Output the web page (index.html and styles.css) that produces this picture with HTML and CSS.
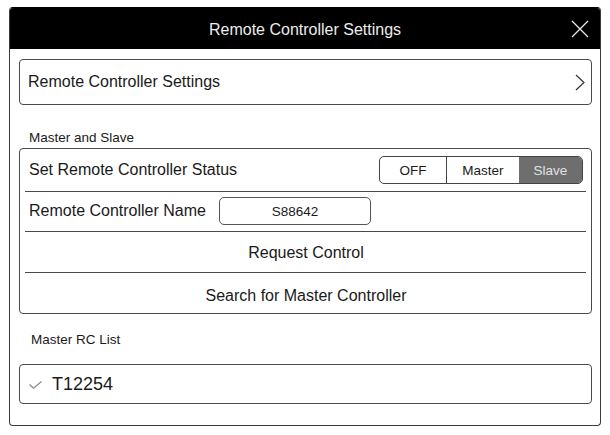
FILE: index.html
```html
<!DOCTYPE html>
<html lang="en">
<head>
<meta charset="utf-8">
<title>Remote Controller Settings</title>
<link rel="stylesheet" href="styles.css">
</head>
<body>
<div class="dialog">
  <div class="header">
    <span class="spacer"></span>
    <span class="title">Remote Controller Settings</span>
    <span class="close">
      <svg width="18" height="18" viewBox="0 0 18 18"><path d="M1 1 L17 17 M17 1 L1 17" stroke="#e6e6e6" stroke-width="1.3" fill="none"/></svg>
    </span>
  </div>
  <div class="content">
    <div class="nav-row">
      <span>Remote Controller Settings</span>
      <svg class="chevron" width="10" height="17" viewBox="0 0 10 17"><path d="M1 1 L9 8.5 L1 16" stroke="#333" stroke-width="1.2" fill="none"/></svg>
    </div>

    <div class="section-label first">Master and Slave</div>
    <div class="group">
      <div class="row row-status">
        <span>Set Remote Controller Status</span>
        <div class="segment">
          <span class="seg seg-off">OFF</span>
          <span class="seg seg-master">Master</span>
          <span class="seg seg-slave active">Slave</span>
        </div>
      </div>
      <div class="row row-name">
        <span class="name-label">Remote Controller Name</span>
        <span class="name-input">S88642</span>
      </div>
      <div class="row row-action row-request">Request Control</div>
      <div class="row row-action row-search">Search for Master Controller</div>
    </div>

    <div class="section-label second">Master RC List</div>
    <div class="list-item">
      <svg class="check" width="13" height="8" viewBox="0 0 13 8"><path d="M0.5 3.5 L4.5 7.2 L12.5 0.5" stroke="#8a8a8a" stroke-width="1.2" fill="none"/></svg>
      <span>T12254</span>
    </div>
  </div>
</div>
</body>
</html>
```

FILE: styles.css
```css
* { box-sizing: border-box; }

html, body {
  margin: 0;
  padding: 0;
  background: #ffffff;
}

body {
  font-family: "Liberation Sans", Arial, sans-serif;
  color: #1a1a1a;
  padding: 7px 0 0 9px;
}

.dialog {
  width: 592px;
  height: 419px;
  border: 1px solid #3c3c3c;
  border-top-color: #000;
  border-radius: 4px;
  overflow: hidden;
  background: #fff;
}

.header {
  height: 41px;
  background: #000;
  color: #ececec;
  font-size: 16px;
  display: grid;
  grid-template-columns: 1fr auto 1fr;
  align-items: center;
  padding-top: 2px;
}

.header .title {
  grid-column: 2;
}

.header .close {
  grid-column: 3;
  justify-self: end;
  margin-right: 11px;
  display: flex;
  margin-top: -2px;
}

.content {
  padding: 10px 8px 0 9px;
}

.nav-row {
  height: 46px;
  border: 1px solid #4a4a4a;
  border-radius: 4px;
  display: flex;
  align-items: center;
  justify-content: space-between;
  padding: 0 6px 0 8px;
  font-size: 16px;
}

.section-label {
  font-size: 13.5px;
  line-height: 18px;
  height: 18px;
}

.section-label.first {
  margin-top: 24px;
  margin-bottom: 1px;
  padding-left: 10px;
}

.section-label.second {
  margin-top: 17px;
  margin-bottom: 15px;
  padding-left: 12px;
}

.group {
  border: 1px solid #4a4a4a;
  border-radius: 4px;
  padding: 0 5px;
  font-size: 16px;
}

.row {
  display: flex;
  align-items: center;
  padding: 0 3px 0 4px;
}

.row-status {
  height: 43px;
  border-bottom: 1px solid #4a4a4a;
  justify-content: space-between;
}

.row-name {
  height: 40px;
  border-bottom: 1px solid #4a4a4a;
  padding-bottom: 1px;
}

.row-request {
  height: 41px;
  border-bottom: 1px solid #4a4a4a;
  padding-top: 2px;
}

.row-search {
  height: 40px;
  padding-top: 5px;
}

.row-action {
  justify-content: center;
}

.segment {
  display: flex;
  width: 204px;
  height: 28px;
  border: 1px solid #444;
  border-radius: 5px;
  overflow: hidden;
  font-size: 13.5px;
}

.seg {
  display: flex;
  align-items: center;
  justify-content: center;
}

.seg-off {
  width: 67px;
  border-right: 1px solid #444;
}

.seg-master {
  width: 72px;
}

.seg-slave {
  flex: 1;
}

.seg.active {
  background: #6e6e6e;
  color: #e2e2e2;
}

.name-label {
  width: 190px;
  flex: none;
}

.name-input {
  width: 152px;
  height: 28px;
  border: 1px solid #555;
  border-radius: 5px;
  font-size: 13.5px;
  display: flex;
  align-items: center;
  justify-content: center;
}

.list-item {
  height: 40px;
  border: 1px solid #4a4a4a;
  border-radius: 4px;
  display: flex;
  align-items: center;
  gap: 10px;
  padding-left: 9px;
  font-size: 18px;
}

.check {
  margin-top: 2px;
}
```
